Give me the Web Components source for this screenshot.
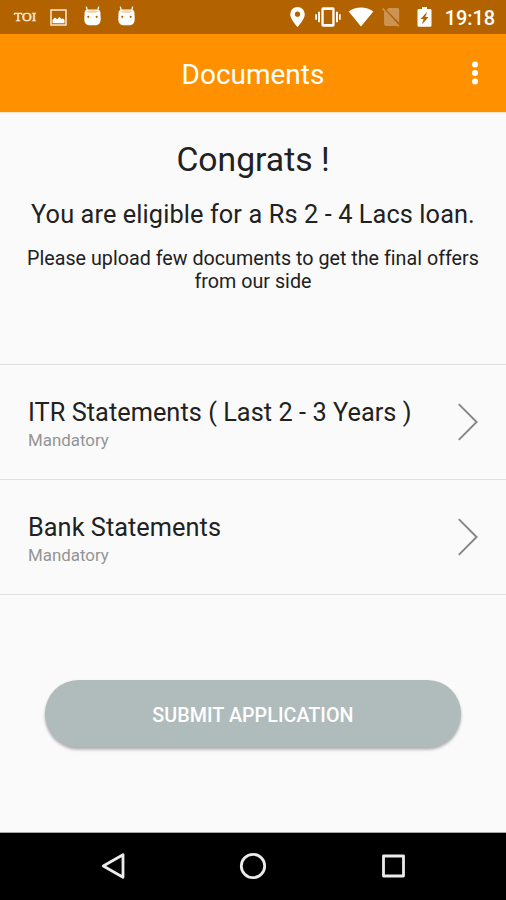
<!DOCTYPE html>
<html lang="en">
<head>
<meta charset="utf-8">
<title>Documents</title>
<style>
  html, body { margin: 0; height: 100%; }
  body { font-family: Roboto, sans-serif; background: #fafafa; overflow: hidden; }
</style>
</head>
<body>
<loan-app></loan-app>

<script>
// [width, height, markup]
const ICONS = {
  picture: [17, 17, '<path d="M1 1h15v15H1z" fill="none" stroke="#fbe9d3" stroke-width="1.5"/><path d="M2.500 14.200v-3.400l2.500-2.300 2.200 1.700L9.500 8l2 2 1.600-.6 1.400 1.400v3.400z"/>'],
  robot: [17, 20, '<path d="M.6 6Q1 3.800 4 3.600h9q3 .2 3.400 2.400l.3 7.500Q16.500 18.800 12 19.200H5Q.5 18.800.3 13.500z"/><path d="M1.800 5.500Q8.500 2.400 15.200 5.500 8.500 8.600 1.800 5.500z" fill="#f0d5b4"/><path d="M2.300.6l1 4M14.700.6l-1 4" stroke="#fff" stroke-width="1.300"/><circle cx="4.300" cy="10.800" r="1.100" fill="#b36200"/><circle cx="12.700" cy="10.800" r="1.100" fill="#b36200"/>'],
  pin: [15, 20, '<path fill-rule="evenodd" d="M7.500 0A7.300 7.300 0 0 0 .2 7.200C.2 12.400 7.500 20 7.500 20s7.300-7.600 7.300-12.800A7.300 7.300 0 0 0 7.500 0zm0 9.800a2.600 2.600 0 1 1 0-5.200 2.600 2.600 0 0 1 0 5.200z"/>'],
  vibrate: [26, 20, '<path fill-rule="evenodd" d="M8.200.3h9.600a1.800 1.800 0 0 1 1.800 1.800v15.800a1.800 1.800 0 0 1-1.800 1.800H8.200a1.800 1.800 0 0 1-1.800-1.800V2.100A1.800 1.800 0 0 1 8.200.3zM8.700 3v14h8.600V3z"/><path d="M3.100 4.800H5v10.400H3.100zM21 4.800h1.900v10.400H21zM.3 7.300H2v5.400H.3zM24 7.300h1.700v5.400H24z"/>'],
  wifi: [26, 20, '<path d="M13 19.600L.7 4.400Q6 .4 13 .4t12.300 4z"/>'],
  nosim: [18, 20, '<g opacity=".32"><path d="M6.500 1h9.200q1.500 0 1.500 1.500v13.300L4.500 3z"/><path d="M1.200.9L0 2l2.100 2.400v12.900Q2.200 19 4 19h11.300l1 .9 1.200-1.100z"/></g>'],
  battery: [15, 20, '<path fill-rule="evenodd" d="M5 0h5v1.900h3.200q1.300 0 1.300 1.300v15.300q0 1.300-1.300 1.300H1.800Q.5 19.800.5 18.500V3.200q0-1.300 1.300-1.300H5zM10.300 4.700L3.500 11.900h3.100L4.900 17.500l6.700-7.400H8.300z"/>'],
  more: [8, 24, '<circle cx="4" cy="3.600" r="3"/><circle cx="4" cy="12" r="3"/><circle cx="4" cy="20.400" r="3"/>'],
  chevron: [21, 38, '<path d="M1.800 1.200L19.600 19 1.800 36.800" fill="none" stroke="#858585" stroke-width="1.900"/>'],
  back: [24, 28, '<path d="M22 2.700v22.600L2.300 14z" fill="none" stroke="#ececec" stroke-width="2.800" stroke-linejoin="round"/>'],
  home: [28, 28, '<circle cx="14" cy="14" r="11.700" fill="none" stroke="#ececec" stroke-width="2.800"/>'],
  recent: [24, 24, '<path d="M1.500 2h20v20h-20z" fill="none" stroke="#ececec" stroke-width="2.800" stroke-linejoin="round"/>']
};

class UiIcon extends HTMLElement {
  constructor() {
    super();
    this.attachShadow({ mode: 'open' });
  }

  connectedCallback() {
    const [w, h, markup] = ICONS[this.getAttribute('name')];
    this.shadowRoot.innerHTML = `
      <style>
        :host { display: block; flex: none; }
        svg { display: block; fill: #fff; }
      </style>
      <svg width="${w}" height="${h}" viewBox="0 0 ${w} ${h}" aria-hidden="true">${markup}</svg>
    `;
  }
}

class StatusBar extends HTMLElement {
  constructor() {
    super();
    this.attachShadow({ mode: 'open' });
    this.shadowRoot.innerHTML = `
      <style>
        :host {
          display: flex; justify-content: space-between; align-items: center;
          box-sizing: border-box; height: 34px; padding: 0 11px 0 14px;
          background: #b36200; color: #fff;
        }
        .left, .right { display: flex; align-items: center; }
        .toi { font: 13.5px/20px "Liberation Serif", serif; width: 23px; color: #fdebd6; margin-right: 13px; -webkit-text-stroke: .4px #fdebd6; }
        .robot { margin: -3px 0 0 17px; }
        .time { font-size: 20px; line-height: 24px; font-weight: 500; margin-left: 13px; letter-spacing: -.1px; margin-top: 2px; }
      </style>
      <div class="left">
        <span class="toi">TOI</span>
        <ui-icon name="picture"></ui-icon>
        <ui-icon class="robot" name="robot"></ui-icon>
        <ui-icon class="robot" name="robot"></ui-icon>
      </div>
      <div class="right">
        <ui-icon name="pin"></ui-icon>
        <ui-icon name="vibrate" style="margin-left:10px"></ui-icon>
        <ui-icon name="wifi" style="margin-left:7px"></ui-icon>
        <ui-icon name="nosim" style="margin-left:8px"></ui-icon>
        <ui-icon name="battery" style="margin-left:17px"></ui-icon>
        <span class="time">19:18</span>
      </div>
    `;
  }
}

class AppBar extends HTMLElement {
  constructor() {
    super();
    this.attachShadow({ mode: 'open' });
    this.shadowRoot.innerHTML = `
      <style>
        :host {
          display: grid; grid-template-columns: 1fr auto 1fr; align-items: center;
          box-sizing: border-box; height: 78px; padding: 0 27px;
          background: #ff9000; color: #fff;
          font-size: 28px; line-height: 34px;
        }
        .title { grid-column: 2; padding-top: 3px; }
        ui-icon { justify-self: end; }
      </style>
      <span class="title"><slot></slot></span>
      <ui-icon name="more"></ui-icon>
    `;
  }
}

class OfferSummary extends HTMLElement {
  constructor() {
    super();
    this.attachShadow({ mode: 'open' });
    this.shadowRoot.innerHTML = `
      <style>
        :host { display: block; box-sizing: border-box; height: 252px; padding: 27px 20px 0; border-top: 1px solid #fbe3c8; text-align: center; color: #212121; }
        h1, h2, p { margin: 0; font-weight: 400; }
        h1 { font-size: 33.7px; line-height: 40px; }
        h2 { font-size: 25.3px; line-height: 30px; margin-top: 19.6px; letter-spacing: .11px; }
        p { font-size: 19.7px; line-height: 23.2px; margin-top: 17px; letter-spacing: .01px; }
      </style>
      <h1><slot name="heading"></slot></h1>
      <h2><slot name="result"></slot></h2>
      <p><slot></slot></p>
    `;
  }
}

class DocumentRow extends HTMLElement {
  constructor() {
    super();
    this.attachShadow({ mode: 'open' });
    this.shadowRoot.innerHTML = `
      <style>
        :host {
          display: flex; justify-content: space-between; align-items: center;
          box-sizing: border-box; height: 115.2px; padding: 0 28px;
          border-top: 1px solid #dfdfdf;
        }
        .text { padding-top: 3px; }
        .name { font-size: 25.3px; line-height: 30px; color: #212121; letter-spacing: .05px; }
        .note { font-size: 16.9px; line-height: 20px; margin-top: 2px; color: #949494; }
      </style>
      <div class="text">
        <div class="name"><slot></slot></div>
        <div class="note"><slot name="note"></slot></div>
      </div>
      <ui-icon name="chevron"></ui-icon>
    `;
  }
}

class PillButton extends HTMLElement {
  constructor() {
    super();
    this.attachShadow({ mode: 'open' });
    this.shadowRoot.innerHTML = `
      <style>
        :host { display: block; }
        button {
          display: block; width: 100%; height: 67.5px; padding: 4px 0 0; border: 0; border-radius: 34px;
          background: #b0bbbc; color: #fff;
          font: 500 19.7px/24px Roboto, sans-serif; letter-spacing: .05px;
          box-shadow: 0 3px 3px rgba(0, 0, 0, .24), 0 1px 3px rgba(0, 0, 0, .1);
        }
      </style>
      <button type="button"><slot></slot></button>
    `;
  }
}

class NavigationBar extends HTMLElement {
  constructor() {
    super();
    this.attachShadow({ mode: 'open' });
    this.shadowRoot.innerHTML = `
      <style>
        :host {
          display: flex; justify-content: space-between; align-items: center;
          box-sizing: border-box; height: 68px; padding: 0 100.5px 1px; background: #000;
          border-top: 1px solid #a8a8a8;
        }
      </style>
      <ui-icon name="back"></ui-icon>
      <ui-icon name="home"></ui-icon>
      <ui-icon name="recent"></ui-icon>
    `;
  }
}

class LoanApp extends HTMLElement {
  constructor() {
    super();
    this.attachShadow({ mode: 'open' });
    this.shadowRoot.innerHTML = `
      <style>
        :host { display: flex; flex-direction: column; height: 900px; background: #fafafa; }
        main { flex: 1; }
        .list { border-bottom: 1px solid #dfdfdf; }
        pill-button { margin: 84.6px 45px 0; }
      </style>
      <status-bar></status-bar>
      <app-bar>Documents</app-bar>
      <main>
        <offer-summary>
          <span slot="heading">Congrats !</span>
          <span slot="result">You are eligible for a Rs 2 - 4 Lacs loan.</span>
          Please upload few documents to get the final offers from our side
        </offer-summary>
        <div class="list">
          <document-row>ITR Statements ( Last 2 - 3 Years )<span slot="note">Mandatory</span></document-row>
          <document-row>Bank Statements<span slot="note">Mandatory</span></document-row>
        </div>
        <pill-button>SUBMIT APPLICATION</pill-button>
      </main>
      <navigation-bar></navigation-bar>
    `;
  }
}

customElements.define('ui-icon', UiIcon);
customElements.define('status-bar', StatusBar);
customElements.define('app-bar', AppBar);
customElements.define('offer-summary', OfferSummary);
customElements.define('document-row', DocumentRow);
customElements.define('pill-button', PillButton);
customElements.define('navigation-bar', NavigationBar);
customElements.define('loan-app', LoanApp);
</script>
</body>
</html>
